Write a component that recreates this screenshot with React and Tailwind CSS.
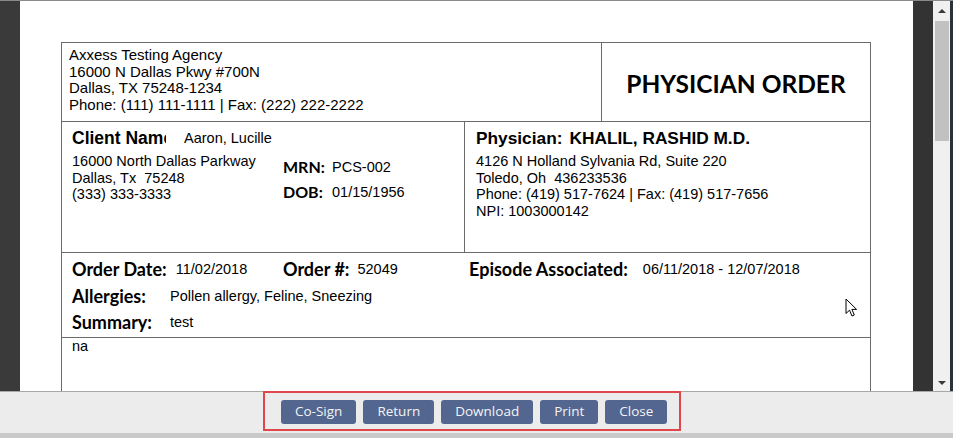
import React from 'react';

const arial = { fontFamily: '"Liberation Sans", Arial, sans-serif' };

function Label({ children, className = '' }) {
    return (
        <span className={`font-['Lato',sans-serif] font-bold text-black ${className}`}>
            {children}
        </span>
    );
}

function Cursor() {
    return (
        <svg className="absolute left-[825px] top-[297px]" width="13" height="20" viewBox="0 0 13 20">
            <path d="M1 1 L1 15.5 L4.5 12.2 L7 18 L9.3 17 L6.9 11.4 L11.6 11.4 Z" fill="#fff" stroke="#000" strokeWidth="1" strokeLinejoin="miter" />
        </svg>
    );
}

function Scrollbar() {
    return (
        <div className="w-[17px] bg-[#f0f0f0] flex flex-col items-center">
            <div className="h-[20px] flex items-center justify-center">
                <div className="w-0 h-0 border-l-[4px] border-r-[4px] border-b-[4px] border-l-transparent border-r-transparent border-b-[#3a3a3a]" />
            </div>
            <div className="w-[14px] h-[120px] bg-[#c1c1c1]" />
            <div className="flex-1" />
            <div className="h-[16px] flex items-center justify-center">
                <div className="w-0 h-0 border-l-[4px] border-r-[4px] border-t-[4px] border-l-transparent border-r-transparent border-t-[#3a3a3a]" />
            </div>
        </div>
    );
}

function Document() {
    return (
        <div className="relative flex-1 bg-white overflow-hidden pt-[41px] px-[41px] text-[14.5px] leading-[16.7px] text-black" style={arial}>
            <div className="border border-[#6b6b6b] w-[810px]">
                {/* header */}
                <div className="flex h-[79px] border-b border-[#6b6b6b]">
                    <div className="w-[540px] border-r border-[#6b6b6b] pl-[7px] pt-[4px] text-[15px]">
                        <div>Axxess Testing Agency</div>
                        <div>16000 N Dallas Pkwy #700N</div>
                        <div>Dallas, TX 75248-1234</div>
                        <div>Phone: (111) 111-1111 | Fax: (222) 222-2222</div>
                    </div>
                    <div className="flex-1 flex items-center justify-center pt-[4px]">
                        <span className="font-['Lato',sans-serif] font-bold text-[24.5px]">PHYSICIAN ORDER</span>
                    </div>
                </div>

                {/* client / physician */}
                <div className="flex h-[131px] border-b border-[#6b6b6b]">
                    <div className="w-[403px] border-r border-[#6b6b6b] pl-[10px] pt-[6px]">
                        <div className="flex items-center h-[20px]">
                            <div className="w-[94px] overflow-hidden whitespace-nowrap font-bold text-[17.5px]">Client Name</div>
                            <div className="ml-[18px]">Aaron, Lucille</div>
                        </div>
                        <div className="flex mt-[5px]">
                            <div className="w-[211px]">
                                <div>16000 North Dallas Parkway</div>
                                <div>Dallas, Tx&nbsp; 75248</div>
                                <div>(333) 333-3333</div>
                            </div>
                            <div className="pt-[4px]">
                                <div className="flex items-center h-[20px]">
                                    <Label className="w-[49px] text-[16px]">MRN:</Label>
                                    <span>PCS-002</span>
                                </div>
                                <div className="flex items-center h-[20px] mt-[5px]">
                                    <Label className="w-[49px] text-[16px]">DOB:</Label>
                                    <span>01/15/1956</span>
                                </div>
                            </div>
                        </div>
                    </div>
                    <div className="flex-1 pl-[11px] pt-[6px]">
                        <div className="flex items-center h-[20px] font-bold text-[17.3px]">
                            <span>Physician:</span>
                            <span className="ml-[7px]">KHALIL, RASHID M.D.</span>
                        </div>
                        <div className="mt-[5px]">
                            <div>4126 N Holland Sylvania Rd, Suite 220</div>
                            <div>Toledo, Oh&nbsp; 436233536</div>
                            <div>Phone: (419) 517-7624 | Fax: (419) 517-7656</div>
                            <div>NPI: 1003000142</div>
                        </div>
                    </div>
                </div>

                {/* order info */}
                <div className="h-[85px] border-b border-[#6b6b6b] pl-[10px] pt-[6px]">
                    <div className="flex items-center h-[20px]">
                        <div className="w-[211px] flex items-center">
                            <Label className="text-[18px]">Order Date:</Label>
                            <span className="ml-[9px]">11/02/2018</span>
                        </div>
                        <div className="w-[186px] flex items-center">
                            <Label className="text-[18px]">Order #:</Label>
                            <span className="ml-[8px]">52049</span>
                        </div>
                        <div className="flex items-center">
                            <Label className="text-[18px]">Episode Associated:</Label>
                            <span className="ml-[15px]">06/11/2018 - 12/07/2018</span>
                        </div>
                    </div>
                    <div className="flex items-center h-[20px] mt-[7px]">
                        <Label className="w-[98px] text-[18px]">Allergies:</Label>
                        <span>Pollen allergy, Feline, Sneezing</span>
                    </div>
                    <div className="flex items-center h-[20px] mt-[6px]">
                        <Label className="w-[98px] text-[18px]">Summary:</Label>
                        <span>test</span>
                    </div>
                </div>

                {/* body */}
                <div className="h-[120px] pl-[10px]">na</div>
            </div>
            <Cursor />
        </div>
    );
}

export default function App() {
    return (
        <div className="w-[953px] h-[438px] flex flex-col bg-[#c9c9c9] overflow-hidden">
            <div className="h-[391px] flex border-t border-[#8a8a8a]">
                <div className="w-[20px] bg-[#3a3a3a]" />
                <Document />
                <div className="w-[20px] bg-[#333333]" />
                <Scrollbar />
                <div className="w-[3px] bg-[#2c323a]" />
            </div>
            <div className="h-[42px] bg-[#ececec] border-t border-[#a8a8a8] pl-[263px]">
                <div className="w-[418px] h-[40px] -mt-[1px] border-2 border-[#e0474c] flex items-center gap-[7px] pl-[16px] pt-[1px]">
                    {['Co-Sign', 'Return', 'Download', 'Print', 'Close'].map((label) => (
                        <button
                            key={label}
                            className="shrink-0 whitespace-nowrap h-[24px] px-[14px] rounded-[3px] bg-[#52668f] text-[#f4f4f4] text-[13.5px] font-['Open_Sans',sans-serif]"
                        >
                            {label}
                        </button>
                    ))}
                </div>
            </div>
        </div>
    );
}
